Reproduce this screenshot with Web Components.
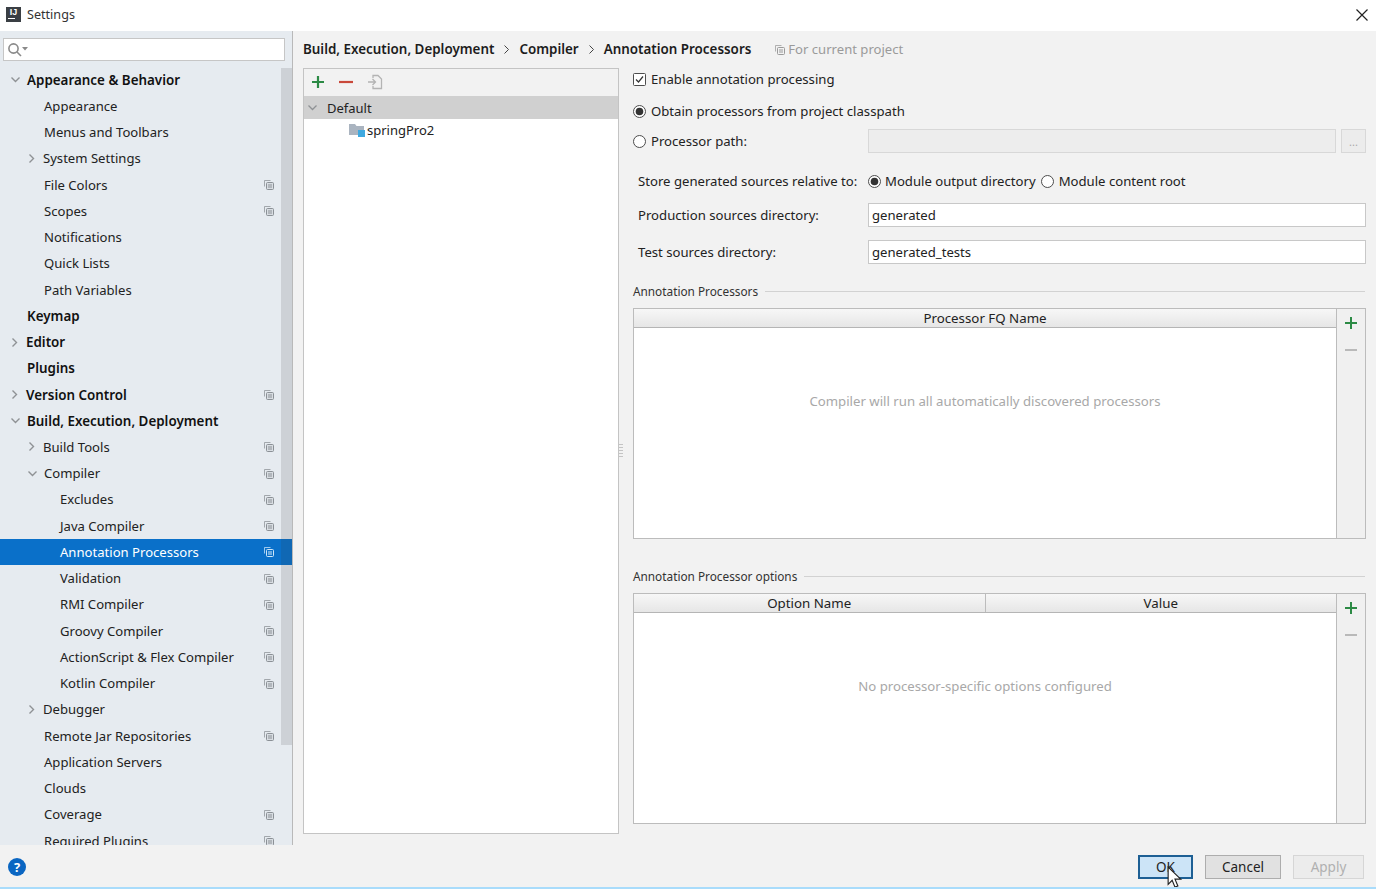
<!DOCTYPE html>
<html lang="en">
<head>
<meta charset="utf-8">
<title>Settings</title>
<style>
  html, body { margin: 0; height: 100%; overflow: hidden; }
  body { font: 13px "Noto Sans", "Open Sans", sans-serif; color: #222; }
</style>
</head>
<body>
<settings-window></settings-window>
<script>
const sharedIcon = `<svg width="11" height="11" viewBox="0 0 11 11" fill="none" stroke="currentColor">
  <path d="M7.5 1.5h-6v6" opacity=".75"/><rect x="3.5" y="3.5" width="7" height="7" rx="1" fill="var(--icon-fill, #d8dde2)"/>
  <path d="M5 6h4M5 8h4"/></svg>`

const chevronRight = '<svg width="9" height="11" viewBox="0 0 9 11" fill="none" stroke="#8f9295" stroke-width="1.4"><path d="M2.5 1.5l4 4-4 4"/></svg>'
const chevronDown = '<svg width="9" height="11" viewBox="0 0 9 11" fill="none" stroke="#8f9295" stroke-width="1.4"><path d="M.5 3.5l4 4 4-4"/></svg>'

const treeItems = [
  { text: 'Appearance & Behavior', indent: 27, bold: true, arrow: 'open' },
  { text: 'Appearance', indent: 44 },
  { text: 'Menus and Toolbars', indent: 44 },
  { text: 'System Settings', indent: 43, arrow: 'closed' },
  { text: 'File Colors', indent: 44, shared: true },
  { text: 'Scopes', indent: 44, shared: true },
  { text: 'Notifications', indent: 44 },
  { text: 'Quick Lists', indent: 44 },
  { text: 'Path Variables', indent: 44 },
  { text: 'Keymap', indent: 27, bold: true },
  { text: 'Editor', indent: 26, bold: true, arrow: 'closed' },
  { text: 'Plugins', indent: 27, bold: true },
  { text: 'Version Control', indent: 26, bold: true, arrow: 'closed', shared: true },
  { text: 'Build, Execution, Deployment', indent: 27, bold: true, arrow: 'open' },
  { text: 'Build Tools', indent: 43, arrow: 'closed', shared: true },
  { text: 'Compiler', indent: 44, arrow: 'open', shared: true },
  { text: 'Excludes', indent: 60, shared: true },
  { text: 'Java Compiler', indent: 60, shared: true },
  { text: 'Annotation Processors', indent: 60, shared: true, selected: true },
  { text: 'Validation', indent: 60, shared: true },
  { text: 'RMI Compiler', indent: 60, shared: true },
  { text: 'Groovy Compiler', indent: 60, shared: true },
  { text: 'ActionScript & Flex Compiler', indent: 60, shared: true },
  { text: 'Kotlin Compiler', indent: 60, shared: true },
  { text: 'Debugger', indent: 43, arrow: 'closed' },
  { text: 'Remote Jar Repositories', indent: 44, shared: true },
  { text: 'Application Servers', indent: 44 },
  { text: 'Clouds', indent: 44 },
  { text: 'Coverage', indent: 44, shared: true },
  { text: 'Required Plugins', indent: 44, shared: true }
]

customElements.define('tree-row',
  /**
   * One row of the settings tree.
   */
  class extends HTMLElement {
    /**
     * Renders the row from its attributes.
     */
    connectedCallback () {
      const indent = this.getAttribute('indent')
      const arrow = this.getAttribute('arrow')
      const shared = this.hasAttribute('shared')
      const icon = arrow === 'open' ? chevronDown : arrow === 'closed' ? chevronRight : ''

      this.attachShadow({ mode: 'open' })
      this.shadowRoot.innerHTML = `
        <style>
          :host {
            display: flex;
            align-items: center;
            height: 26.24px;
            color: #222;
            font-size: 13.1px;
            white-space: nowrap;
          }
          :host([bold]) { font-size: 13.4px; font-weight: 600; color: #111; }
          :host([selected]) { background: #0a70c9; color: #fff; --icon-fill: #0a70c9; }
          .gutter {
            display: flex;
            justify-content: flex-end;
            width: ${indent}px;
            flex: none;
          }
          .gutter svg { margin-right: 7px; }
          .label { flex: 1; }
          .shared {
            display: flex;
            margin-right: 18px;
            color: #8b9096;
          }
          :host([selected]) .shared { color: #cfe6f8; }
        </style>
        <span class="gutter">${icon}</span>
        <span class="label"><slot></slot></span>
        ${shared ? `<span class="shared">${sharedIcon}</span>` : ''}
      `
    }
  })

customElements.define('settings-tree',
  /**
   * Left column with the search field and the scrolled tree.
   */
  class extends HTMLElement {
    /**
     * Creates the column and fills in the tree rows.
     */
    constructor () {
      super()
      this.attachShadow({ mode: 'open' })
      this.shadowRoot.innerHTML = `
        <style>
          :host {
            display: flex;
            flex-direction: column;
            width: 292px;
            flex: none;
            background: #e6ebf0;
            border-right: 1px solid #b9b9b9;
            box-sizing: content-box;
            min-height: 0;
          }
          .search {
            display: flex;
            align-items: center;
            height: 23px;
            box-sizing: border-box;
            margin: 7px 7px 5.6px 3px;
            padding-left: 3px;
            background: #fff;
            border: 1px solid #c6c6c6;
          }
          .rows {
            position: relative;
            flex: 1;
            overflow: hidden;
            min-height: 0;
          }
          .thumb {
            position: absolute;
            top: 1.4px;
            right: 0;
            width: 11px;
            height: 677px;
            background: rgba(60, 60, 60, 0.14);
          }
        </style>
        <div class="search">
          <svg width="22" height="16" viewBox="0 0 22 16" fill="none" stroke="#8a8a8a" stroke-width="1.6">
            <circle cx="6.5" cy="6.5" r="4.6"/><path d="M10 10l4 4"/><path d="M15 5h6l-3 3.5z" fill="#8a8a8a" stroke="none"/>
          </svg>
        </div>
        <div class="rows"><div class="thumb"></div></div>
      `
      const rows = this.shadowRoot.querySelector('.rows')
      const thumb = rows.querySelector('.thumb')
      for (const item of treeItems) {
        const row = document.createElement('tree-row')
        row.textContent = item.text
        row.setAttribute('indent', item.indent)
        if (item.arrow) row.setAttribute('arrow', item.arrow)
        if (item.bold) row.setAttribute('bold', '')
        if (item.shared) row.setAttribute('shared', '')
        if (item.selected) row.setAttribute('selected', '')
        rows.insertBefore(row, thumb)
      }
    }
  })

customElements.define('profile-list',
  /**
   * Box listing the annotation processor profiles.
   */
  class extends HTMLElement {
    /**
     * Creates the profile list.
     */
    constructor () {
      super()
      this.attachShadow({ mode: 'open' })
      this.shadowRoot.innerHTML = `
        <style>
          :host {
            display: block;
            width: 316px;
            height: 766px;
            flex: none;
            box-sizing: border-box;
            margin-left: 10px;
            background: #fff;
            border: 1px solid #c4c4c4;
          }
          .tools {
            display: flex;
            align-items: center;
            gap: 14px;
            box-sizing: border-box;
            height: 27px;
            padding: 0 0 2px 7px;
            background: #f2f2f2;
          }
          .default {
            display: flex;
            align-items: center;
            height: 23px;
            background: #d0d0d0;
            color: #222;
          }
          .default svg { margin: 0 10px 0 4px; }
          .module {
            display: flex;
            align-items: center;
            height: 22px;
            padding-left: 45px;
            color: #222;
          }
          .module svg { margin-right: 2px; }
        </style>
        <div class="tools">
          <svg width="14" height="14" viewBox="0 0 14 14" stroke="#2c8a45" stroke-width="2.2"><path d="M7 1v12M1 7h12"/></svg>
          <svg width="14" height="14" viewBox="0 0 14 14" stroke="#c9483a" stroke-width="2.2"><path d="M0 7h14"/></svg>
          <svg width="16" height="16" viewBox="0 0 16 16" fill="none" stroke="#b4b4b4" stroke-width="1.3"><path d="M6 4V1.500h5l3.500 3.500v9.500H6V12"/><path d="M1 8h7M5.500 5l3 3-3 3"/></svg>
        </div>
        <div class="default">
          <svg width="9" height="11" viewBox="0 0 9 11" fill="none" stroke="#8f9295" stroke-width="1.3"><path d="M.5 3.5l4 4 4-4"/></svg>
          <span>Default</span>
        </div>
        <div class="module">
          <svg width="16" height="14" viewBox="0 0 16 14"><path d="M0 1h6l1.500 2H15v9H0z" fill="#aab4c0"/><rect x="9" y="7" width="7" height="7" fill="#3fa9e0"/></svg>
          <span>springPro2</span>
        </div>
      `
    }
  })

customElements.define('option-mark',
  /**
   * Checkbox or radio button drawn to the look of the IDE.
   */
  class extends HTMLElement {
    /**
     * Creates the mark; type is "check" or "radio".
     */
    constructor () {
      super()
      this.attachShadow({ mode: 'open' })
      const on = this.hasAttribute('on')
      const svg = this.getAttribute('type') === 'check'
        ? `<rect x=".5" y=".5" width="12" height="12" rx="1" fill="#fff" stroke="#4d4d4d"/>
           <path d="M3 6.500l2.500 2.500 4.500-5.500" fill="none" stroke="#333" stroke-width="1.200"/>`
        : `<circle cx="6.500" cy="6.500" r="6" fill="#fff" stroke="#4d4d4d"/>
           ${on ? '<circle cx="6.500" cy="6.500" r="3.800" fill="#333"/>' : ''}`
      this.shadowRoot.innerHTML = `
        <style>:host { display: inline-flex; flex: none; width: 13px; height: 13px; }</style>
        <svg width="13" height="13" viewBox="0 0 13 13">${svg}</svg>
      `
    }
  })

customElements.define('text-field',
  /**
   * Single line text field, disabled when the attribute is present.
   */
  class extends HTMLElement {
    /**
     * Creates the field.
     */
    constructor () {
      super()
      this.attachShadow({ mode: 'open' })
      this.shadowRoot.innerHTML = `
        <style>
          :host {
            display: flex;
            align-items: center;
            box-sizing: border-box;
            height: 24px;
            padding-left: 3px;
            background: #fff;
            border: 1px solid #c8c8c8;
            color: #222;
          }
          :host([disabled]) { background: #ededed; border-color: #d8d8d8; }
        </style>
        <slot></slot>
      `
    }
  })

customElements.define('group-title',
  /**
   * Section title followed by a thin rule.
   */
  class extends HTMLElement {
    /**
     * Creates the title.
     */
    constructor () {
      super()
      this.attachShadow({ mode: 'open' })
      this.shadowRoot.innerHTML = `
        <style>
          :host {
            display: flex;
            align-items: center;
            gap: 7px;
            height: 20px;
            font-size: 11.8px;
            color: #333;
          }
          i { flex: 1; height: 1px; background: #d2d2d2; margin-right: 1px; }
        </style>
        <slot></slot><i></i>
      `
    }
  })

customElements.define('data-table',
  /**
   * Empty table with a header row and an add/remove strip on its right.
   */
  class extends HTMLElement {
    /**
     * Creates the table from the "columns" and "empty" attributes.
     */
    constructor () {
      super()
      this.attachShadow({ mode: 'open' })
      const heads = this.getAttribute('columns').split('|')
        .map(name => `<div class="head">${name}</div>`).join('')
      this.shadowRoot.innerHTML = `
        <style>
          :host {
            display: flex;
            height: 231px;
            box-sizing: border-box;
            border: 1px solid #bcbcbc;
            background: #fff;
          }
          .main { flex: 1; display: flex; flex-direction: column; }
          .heads {
            display: flex;
            height: 18px;
            border-bottom: 1px solid #b5b5b5;
            background: linear-gradient(#f7f7f7, #e6e6e6);
            font-size: 13.3px;
            color: #222;
          }
          .head {
            flex: 1;
            text-align: center;
            line-height: 18px;
          }
          .head + .head { border-left: 1px solid #bcbcbc; }
          .empty {
            flex: 1;
            display: flex;
            align-items: center;
            justify-content: center;
            padding-bottom: 64px;
            color: #a8a8a8;
            font-size: 13.2px;
          }
          .side {
            display: flex;
            flex-direction: column;
            align-items: center;
            gap: 13px;
            width: 29px;
            padding-top: 7px;
            box-sizing: border-box;
            background: #f0f0f0;
            border-left: 1px solid #bcbcbc;
          }
        </style>
        <div class="main">
          <div class="heads">${heads}</div>
          <div class="empty">${this.getAttribute('empty')}</div>
        </div>
        <div class="side">
          <svg width="14" height="14" viewBox="0 0 14 14" stroke="#2c8a45" stroke-width="2"><path d="M7 1v12M1 7h12"/></svg>
          <svg width="14" height="14" viewBox="0 0 14 14" stroke="#b9b9b9" stroke-width="2"><path d="M1 7h12"/></svg>
        </div>
      `
    }
  })

customElements.define('processor-form',
  /**
   * The form on the right of the annotation processors page.
   */
  class extends HTMLElement {
    /**
     * Creates the form.
     */
    constructor () {
      super()
      this.attachShadow({ mode: 'open' })
      this.shadowRoot.innerHTML = `
        <style>
          :host {
            display: flex;
            flex-direction: column;
            width: 733px;
            flex: none;
            font-size: 13.15px;
            color: #222;
          }
          .line { display: flex; align-items: center; gap: 5px; white-space: nowrap; }
          .enable { height: 22px; }
          .obtain { height: 22px; margin-top: 10px; }
          .path { height: 24px; margin-top: 7px; }
          .path .lbl { width: 212px; }
          .path text-field { flex: 1; }
          .dots {
            display: flex;
            align-items: center;
            justify-content: center;
            box-sizing: border-box;
            width: 25px;
            height: 24px;
            background: #ececec;
            border: 1px solid #d8d8d8;
            color: #aaa;
            font-size: 11px;
          }
          .store { height: 22px; margin-top: 17px; padding-left: 5px; }
          .store .lbl { width: 225px; }
          .store .module { margin-left: -1px; }
          .dir { height: 24px; padding-left: 5px; }
          .dir .lbl { width: 225px; flex: none; }
          .dir text-field { flex: 1; }
          .prod { margin-top: 11px; }
          .test { margin-top: 13px; }
          .t1 { margin-top: 17px; }
          .t2 { margin-top: 27px; }
          data-table { margin-top: 7px; }
        </style>
        <div class="line enable"><option-mark type="check" on></option-mark><span>Enable annotation processing</span></div>
        <div class="line obtain"><option-mark type="radio" on></option-mark><span>Obtain processors from project classpath</span></div>
        <div class="line path"><option-mark type="radio"></option-mark><span class="lbl">Processor path:</span><text-field disabled></text-field><div class="dots">...</div></div>
        <div class="line store"><span class="lbl">Store generated sources relative to:</span><option-mark type="radio" on></option-mark><span class="module">Module output directory</span><option-mark type="radio"></option-mark><span>Module content root</span></div>
        <div class="line dir prod"><span class="lbl">Production sources directory:</span><text-field>generated</text-field></div>
        <div class="line dir test"><span class="lbl">Test sources directory:</span><text-field>generated_tests</text-field></div>
        <group-title class="t1">Annotation Processors</group-title>
        <data-table columns="Processor FQ Name" empty="Compiler will run all automatically discovered processors"></data-table>
        <group-title class="t2">Annotation Processor options</group-title>
        <data-table columns="Option Name|Value" empty="No processor-specific options configured"></data-table>
      `
    }
  })

customElements.define('dialog-button',
  /**
   * Button of the dialog footer.
   */
  class extends HTMLElement {
    /**
     * Creates the button.
     */
    constructor () {
      super()
      this.attachShadow({ mode: 'open' })
      this.shadowRoot.innerHTML = `
        <style>
          :host {
            display: flex;
            align-items: center;
            justify-content: center;
            box-sizing: border-box;
            height: 24px;
            background: #e1e1e1;
            border: 1px solid #adadad;
            color: #222;
            font-size: 13.5px;
          }
          :host([primary]) { background: #cce4f7; border: 2px solid #1d5f94; }
          :host([disabled]) { background: #ececec; border-color: #d6d6d6; color: #b0b0b0; }
        </style>
        <slot></slot>
      `
    }
  })

customElements.define('settings-window',
  /**
   * The whole settings dialog.
   */
  class extends HTMLElement {
    /**
     * Creates the dialog.
     */
    constructor () {
      super()
      this.attachShadow({ mode: 'open' })
      this.shadowRoot.innerHTML = `
        <style>
          :host {
            display: flex;
            flex-direction: column;
            position: relative;
            height: 889px;
            background: #f2f2f2;
            overflow: hidden;
            border-bottom: 2px solid #a9dcfb;
            box-sizing: border-box;
          }
          .title {
            display: flex;
            align-items: center;
            height: 31px;
            flex: none;
            padding: 0 8px 2px 6px;
            background: #fff;
            font-size: 12.6px;
            color: #333;
            box-sizing: border-box;
          }
          .logo {
            display: flex;
            flex-direction: column;
            align-items: center;
            box-sizing: border-box;
            width: 15px;
            height: 15px;
            margin-right: 6px;
            padding-top: 1px;
            background: #3a3f44;
            color: #fff;
            font: bold 9px/9px "Liberation Sans", sans-serif;
          }
          .logo i { width: 7px; height: 1px; margin: 1px 5px 0 0; background: #fff; }
          .title span { flex: 1; }
          .middle { flex: 1; display: flex; min-height: 0; }
          .page { flex: 1; display: flex; flex-direction: column; min-width: 0; }
          .crumbs {
            display: flex;
            align-items: center;
            height: 37px;
            flex: none;
            box-sizing: border-box;
            padding: 0 0 1px 10px;
            font-size: 13.4px;
            font-weight: 600;
            color: #1c1c1c;
            white-space: nowrap;
          }
          .crumbs svg.sep { margin: 0 10px; }
          .current {
            display: flex;
            align-items: center;
            gap: 3px;
            margin-left: 23px;
            font-weight: 400;
            font-size: 13.1px;
            color: #9a9a9a;
            --icon-fill: #f2f2f2;
          }
          .panes { display: flex; }
          .split {
            display: flex;
            align-items: center;
            justify-content: center;
            width: 14px;
            height: 766px;
            flex: none;
          }
          .split i {
            width: 5px;
            height: 14px;
            margin-right: 10px;
            background: repeating-linear-gradient(#c4c4c4 0 1px, transparent 1px 3px);
          }
          .footer {
            display: flex;
            align-items: center;
            height: 42px;
            flex: none;
            padding: 2px 12px 0 8px;
            background: #f2f2f2;
            box-sizing: border-box;
          }
          .help {
            display: flex;
            align-items: center;
            justify-content: center;
            width: 18px;
            height: 18px;
            border-radius: 50%;
            background: #0a66c2;
            color: #fff;
            font: bold 13px "Noto Sans", sans-serif;
          }
          .grow { flex: 1; }
          .ok { width: 55px; }
          .cancel { width: 76px; margin-left: 12px; }
          .apply { width: 71px; margin-left: 12px; }
          .cursor { position: absolute; left: 1167px; top: 866px; }
        </style>
        <div class="title">
          <div class="logo">IJ<i></i></div>
          <span>Settings</span>
          <svg width="12" height="12" viewBox="0 0 12 12" stroke="#222" stroke-width="1.200"><path d="M.5.5l11 11M11.500.5l-11 11"/></svg>
        </div>
        <div class="middle">
          <settings-tree></settings-tree>
          <div class="page">
            <div class="crumbs">
              <span>Build, Execution, Deployment</span>
              <svg class="sep" width="5" height="9" viewBox="0 0 5 9" fill="none" stroke="#444"><path d="M.5.5l4 4-4 4"/></svg>
              <span>Compiler</span>
              <svg class="sep" width="5" height="9" viewBox="0 0 5 9" fill="none" stroke="#444"><path d="M.5.5l4 4-4 4"/></svg>
              <span>Annotation Processors</span>
              <span class="current">${sharedIcon}For current project</span>
            </div>
            <div class="panes">
              <profile-list></profile-list>
              <div class="split"><i></i></div>
              <processor-form></processor-form>
            </div>
          </div>
        </div>
        <div class="footer">
          <div class="help">?</div>
          <div class="grow"></div>
          <dialog-button class="ok" primary>OK</dialog-button>
          <dialog-button class="cancel">Cancel</dialog-button>
          <dialog-button class="apply" disabled>Apply</dialog-button>
        </div>
        <svg class="cursor" width="16" height="24" viewBox="0 0 14 21">
          <path d="M1 1v15l3.500-3.500 2.500 6 2.500-1-2.500-6h5z" fill="#fff" stroke="#222"/>
        </svg>
      `
    }
  })
</script>
</body>
</html>
